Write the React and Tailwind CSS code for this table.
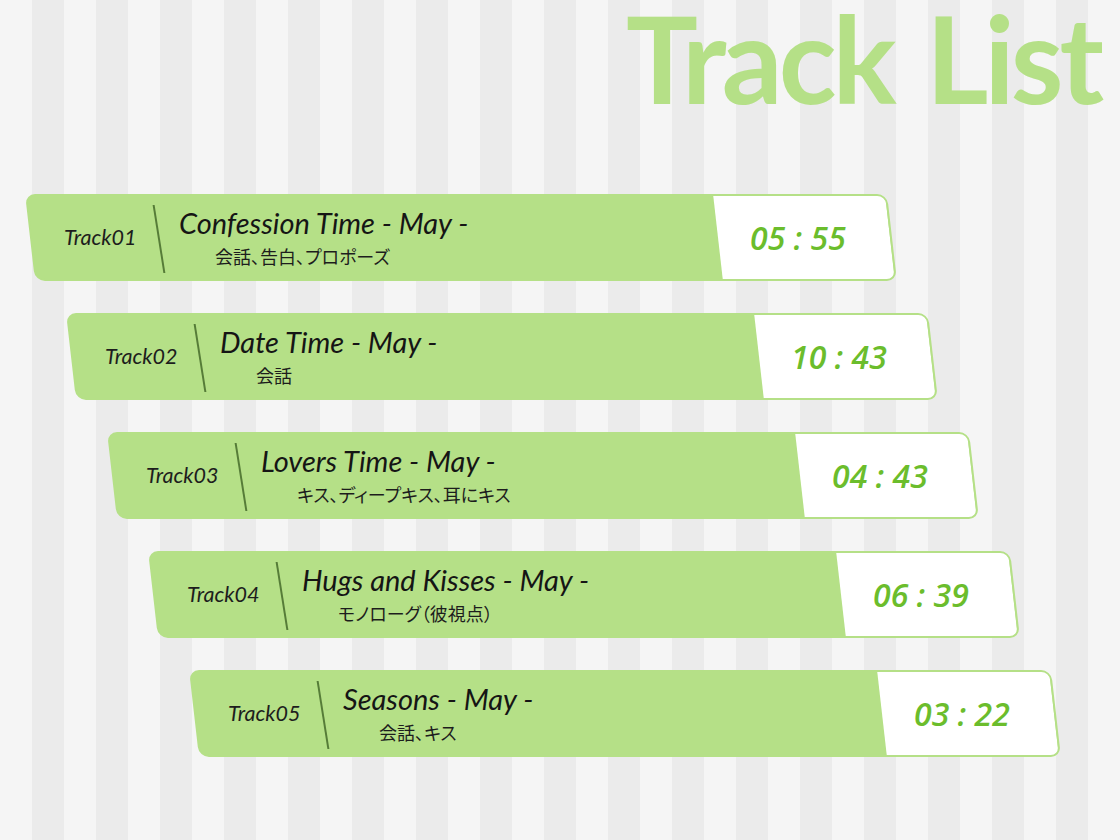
import React from "react";

const tracks = [
  { no: "Track01", title: "Confession Time - May -", sub: "会話、告白、プロポーズ", time: "05 : 55", ml: "ml-[30px]" },
  { no: "Track02", title: "Date Time - May -", sub: "会話", time: "10 : 43", ml: "ml-[71px]" },
  { no: "Track03", title: "Lovers Time - May -", sub: "キス、ディープキス、耳にキス", time: "04 : 43", ml: "ml-[112px]" },
  { no: "Track04", title: "Hugs and Kisses - May -", sub: "モノローグ（彼視点）", time: "06 : 39", ml: "ml-[153px]" },
  { no: "Track05", title: "Seasons - May -", sub: "会話、キス", time: "03 : 22", ml: "ml-[194px]" },
];

function Card({ t }) {
  return (
    <div
      className={`${t.ml} w-[862px] h-[87px] flex skew-x-[6.5deg] rounded-[10px] border-2 border-[#b5e087] bg-[#b5e087] overflow-hidden`}
    >
      <div className="flex-1 flex items-center -skew-x-[6.5deg] pl-[32px]">
        <span className="w-[78px] text-[21.5px] italic text-[#1d1d1d] font-['Lato',sans-serif] whitespace-nowrap">
          {t.no}
        </span>
        <div className="ml-[16px] w-[2px] h-[68px] bg-[#567c38] skew-x-[9deg] mt-[2px]" />
        <div className="ml-[19px] flex flex-col">
          <span className="text-[29px] leading-[30px] italic text-[#151515] font-['Lato',sans-serif] whitespace-nowrap">
            {t.title}
          </span>
          <span className="mt-[7px] ml-[36px] text-[18px] leading-[22px] text-[#1d1d1d] font-['Noto_Sans_CJK_JP',sans-serif] whitespace-nowrap [font-feature-settings:'palt']">
            {t.sub}
          </span>
        </div>
      </div>
      <div className="w-[172px] bg-white flex items-center justify-center">
        <span className="-skew-x-[6.5deg] mr-[12px] text-[32px] italic font-semibold text-[#6bbd2c] font-['Open_Sans',sans-serif] whitespace-nowrap">
          {t.time}
        </span>
      </div>
    </div>
  );
}

export default function App() {
  return (
    <div className="w-[1120px] h-[840px] overflow-hidden bg-[repeating-linear-gradient(90deg,#f5f5f5_0px,#f5f5f5_32px,#ebebeb_32px,#ebebeb_64px)]">
      <div className="h-[116px] pl-[626px] whitespace-nowrap text-[120px] leading-[116px] font-bold text-[#b5e087] font-['Lato',sans-serif] tracking-[-4px] [word-spacing:8px]">
        Track List
      </div>
      <div className="mt-[78px] flex flex-col gap-[32px]">
        {tracks.map((t) => (
          <Card key={t.no} t={t} />
        ))}
      </div>
    </div>
  );
}
